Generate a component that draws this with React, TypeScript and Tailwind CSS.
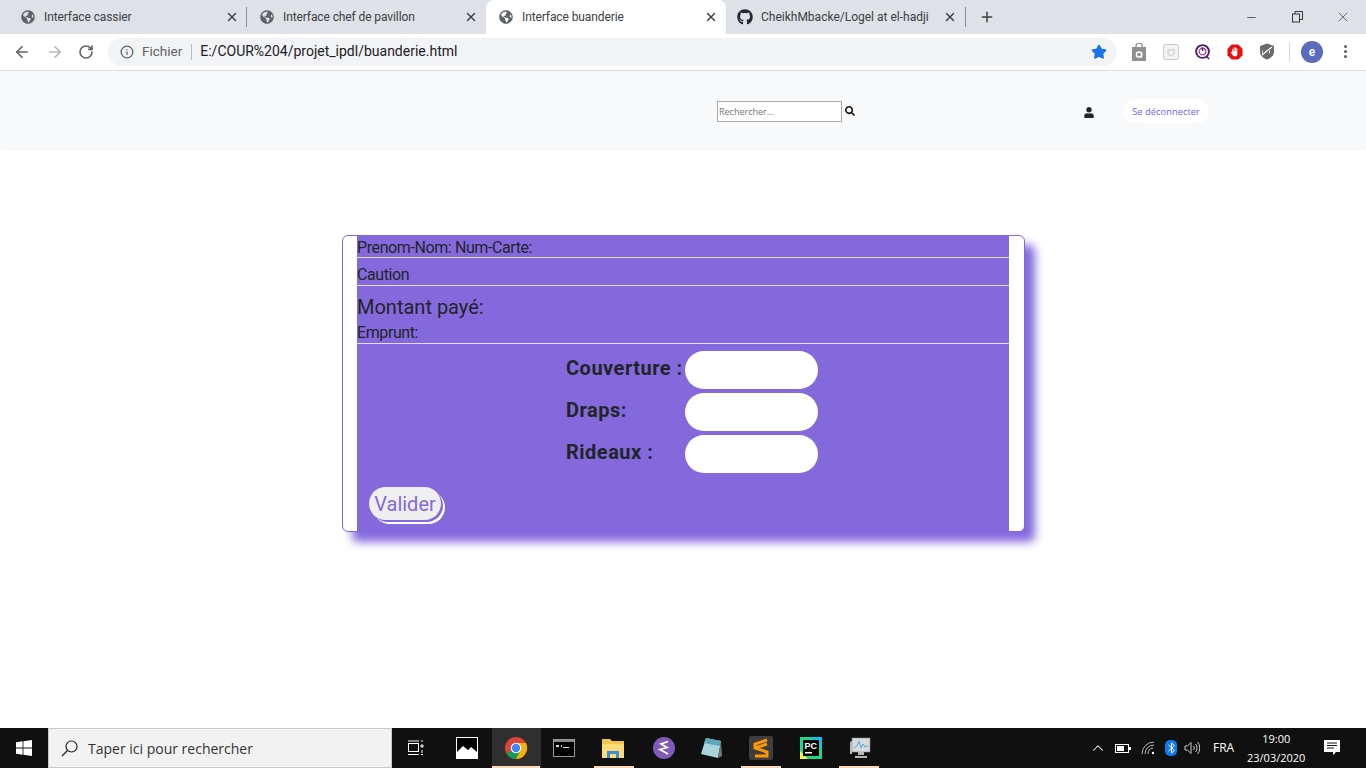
import { ArrowLeft, ArrowRight, RotateCw, Info, Plus, X, Minus, Star, MoreVertical, ChevronUp } from "lucide-react";
import { FaGlobeAmericas, FaGithub, FaUser, FaSearch } from "react-icons/fa";

const Tab = ({ title, github, active }: { title: string; github?: boolean; active?: boolean }) => (
  <div
    className={`flex h-[34px] shrink-0 items-center pr-[8px] ${active ? "w-[240px] rounded-t-lg bg-white" : "w-[239px]"} ${github ? "pl-[11px]" : "pl-[13px]"}`}
  >
    {github ? (
      <FaGithub className="h-4 w-4 shrink-0 text-[#24292e]" />
    ) : (
      <FaGlobeAmericas className="h-[14px] w-[14px] shrink-0 text-[#5f6368]" />
    )}
    <span className={`flex-1 truncate text-[12px] text-[#3c4043] ${github ? "ml-[8px]" : "ml-[9px] tracking-[-0.1px]"}`}>{title}</span>
    <X className="h-[14px] w-[14px] shrink-0 text-[#3c4043]" strokeWidth={2.4} />
  </div>
);

const Extension = ({ children }: { children: React.ReactNode }) => (
  <div className="flex h-4 w-4 items-center justify-center">{children}</div>
);

const TaskItem = ({ children, running, active }: { children: React.ReactNode; running?: boolean; active?: boolean }) => (
  <div className={`relative flex h-10 w-[49px] shrink-0 items-center justify-center ${active ? "bg-[#2f2f2f]" : ""}`}>
    {children}
    {running && <div className="absolute bottom-0 left-[4px] h-[2px] w-10 bg-[#fad9b8]" />}
    {active && <div className="absolute bottom-0 left-0 h-[2px] w-12 bg-[#fad9b8]" />}
  </div>
);

const Row = ({ label, last }: { label: string; last?: boolean }) => (
  <div className={`flex h-[38px] items-center ${last ? "" : "mb-1"}`}>
    <label className="-mt-[4px] w-[119px] whitespace-nowrap text-[20px] font-bold leading-none tracking-[0.5px] text-[#212529]">{label}</label>
    <input className="h-[38px] w-[133px] rounded-[19px] bg-white outline-none" />
  </div>
);

export default function App() {
  return (
    <div className="flex h-[768px] w-[1366px] flex-col overflow-hidden bg-white font-['Roboto',sans-serif]">
      {/* browser chrome */}
      <div className="flex h-[34px] shrink-0 items-center bg-[#dee1e6] pl-[8px]">
        <div className="w-[238px] shrink-0 overflow-hidden">
          <Tab title="Interface cassier" />
        </div>
        <div className="h-5 w-px bg-[#8a8d91]" />
        <Tab title="Interface chef de pavillon" />
        <Tab title="Interface buanderie" active />
        <Tab title="CheikhMbacke/Logel at el-hadji" github />
        <div className="h-5 w-px bg-[#8a8d91]" />
        <Plus className="ml-[13px] h-[16px] w-[16px] text-[#3c4043]" strokeWidth={2.2} />
        <div className="ml-auto flex items-center">
          <div className="flex w-[46px] justify-center">
            <Minus className="h-[13px] w-[13px] text-[#333]" strokeWidth={1.4} />
          </div>
          <div className="flex w-[46px] justify-center">
            <svg width="11" height="12" viewBox="0 0 11 12" fill="none" stroke="#333" strokeWidth="1">
              <rect x="0.5" y="3" width="7" height="8" />
              <path d="M3 3V0.5h7.5V8.5H7.5" />
            </svg>
          </div>
          <div className="flex w-[46px] justify-center">
            <X className="h-[16px] w-[16px] text-[#333]" strokeWidth={1} />
          </div>
        </div>
      </div>

      <div className="flex h-[37px] shrink-0 items-center border-b border-[#dadce0] bg-white pb-[1px]">
        <ArrowLeft className="ml-[13px] h-[18px] w-[18px] text-[#5f6368]" strokeWidth={2.2} />
        <ArrowRight className="ml-[15px] h-[18px] w-[18px] text-[#b4b6b9]" strokeWidth={2.2} />
        <RotateCw className="ml-[14px] h-[16px] w-[16px] text-[#5f6368]" strokeWidth={2.4} />
        <div className="ml-[14px] flex h-[28px] w-[1009px] items-center rounded-full bg-[#f1f3f4] pl-[12px] pr-[10px] text-[14px]">
          <Info className="h-[14px] w-[14px] text-[#5f6368]" strokeWidth={2.2} />
          <span className="ml-[8px] text-[13.5px] text-[#5f6368]">Fichier</span>
          <div className="ml-[9px] mr-[8px] h-[16px] w-px bg-[#b8babd]" />
          <span className="text-[#202124]">E:/COUR%204/projet_ipdl/buanderie.html</span>
          <Star className="ml-auto h-[16px] w-[16px] fill-[#1a73e8] text-[#1a73e8]" />
        </div>
        <div className="ml-[14px] flex items-center gap-[16px]">
          <Extension>
            <svg width="16" height="18" viewBox="0 0 16 18">
              <path d="M1 4h14v14H1z" fill="#8f8f8f" />
              <path d="M5 4V3a3 3 0 0 1 6 0v1" fill="none" stroke="#8f8f8f" strokeWidth="1.3" />
              <circle cx="8" cy="11.5" r="2.6" fill="none" stroke="#fff" strokeWidth="1.5" />
              <path d="M10.6 9v5.5" stroke="#fff" strokeWidth="1.3" />
            </svg>
          </Extension>
          <Extension>
            <svg width="16" height="16" viewBox="0 0 16 16">
              <rect x="0.5" y="0.5" width="15" height="15" rx="1.5" fill="#f1f3f4" stroke="#c9cbce" />
              <path d="M5 5l1.5 1h3L11 5v5l-3 2-3-2z" fill="none" stroke="#c9cbce" />
            </svg>
          </Extension>
          <Extension>
            <svg width="18" height="18" viewBox="0 0 17 17" fill="none">
              <circle cx="8" cy="8" r="6.8" stroke="#4a1d6b" strokeWidth="2" />
              <circle cx="8" cy="8" r="3.5" stroke="#a3479c" strokeWidth="1.4" />
              <path d="M8 3.5v4" stroke="#4a1d6b" strokeWidth="1.4" />
              <path d="M12 13l3 3" stroke="#4a1d6b" strokeWidth="1.6" />
            </svg>
          </Extension>
          <Extension>
            <svg width="18" height="18" viewBox="0 0 17 17">
              <path d="M5 0.5h7l4.5 4.5v7L12 16.5H5L0.5 12V5z" fill="#e8100f" />
              <path d="M5.5 8V5.2h1V8h.5V3.8h1V8h.5V3.5h1V8h.5V4.5h1v6c0 1.5-1 2.5-2.6 2.5-1.3 0-2-.6-2.6-1.6L4 9l.8-.5z" fill="#fff" />
            </svg>
          </Extension>
          <Extension>
            <svg width="16" height="17" viewBox="0 0 16 17">
              <path d="M8 0.5l7 2.5v6c0 3.5-3 6-7 7.5-4-1.5-7-4-7-7.5V3z" fill="#6b6b6b" />
              <path d="M3 12L13 4" stroke="#fff" strokeWidth="1.2" />
              <path d="M3.5 7.5v3h2M7 7.5H9M10.5 7.5v3" stroke="#ddd" strokeWidth="1" fill="none" />
            </svg>
          </Extension>
        </div>
        <div className="ml-[14px] h-[20px] w-px bg-[#d5d7da]" />
        <div className="ml-[11px] flex h-[22px] w-[22px] items-center justify-center rounded-full bg-[#5c6bc0] text-[12px] font-medium text-white">
          e
        </div>
        <MoreVertical className="ml-[14px] h-[17px] w-[17px] text-[#5f6368]" strokeWidth={2.4} />
      </div>

      {/* page */}
      <div className="flex-1 overflow-hidden">
        <nav className="flex h-[80px] items-start rounded-b-[4px] bg-[#f8f9fa] pl-[717px] pt-[30px] font-['Open_Sans',sans-serif]">
          <input
            placeholder="Rechercher..."
            className="h-[21px] w-[125px] border border-[#a9a9a9] bg-white px-[1px] text-[9px] outline-none placeholder:text-[#757575]"
          />
          <FaSearch className="ml-[3px] mt-[5px] h-[10px] w-[10px] text-[#111]" />
          <FaUser className="ml-[229px] mt-[6px] h-[11px] w-[10px] text-[#212529]" />
          <div className="ml-[29px] -mt-[2px] flex h-[24px] w-[86px] items-center justify-center rounded-full bg-white pt-[2px] text-[9.4px] text-[#7a5cf5]">
            Se déconnecter
          </div>
        </nav>

        <div className="ml-[342px] mt-[84px] h-[297px] w-[683px] rounded-[6px] border border-[#8469dd] bg-white pl-[14px] pr-[15px] shadow-[10px_10px_10px_#8469dd]">
          <div className="h-full bg-[#8469dd] text-[#212529]">
            <div className="h-[22px] border-b border-[#e3dcf8] pt-[1px] text-[16px] leading-[21px] tracking-[-0.4px]">Prenom-Nom: Num-Carte:</div>
            <div className="h-[28px] border-b border-[#e3dcf8] pt-[6px] text-[16px] leading-[21px] tracking-[-0.4px]">Caution</div>
            <div className="h-[58px] border-b border-[#e3dcf8]">
              <div className="pt-[8px] text-[20px] leading-[27px]">Montant payé:</div>
              <div className="pt-[1px] text-[16px] leading-[21px] tracking-[-0.4px]">Emprunt:</div>
            </div>
            <div className="pl-[209px] pt-[7px]">
              <Row label="Couverture :" />
              <Row label="Draps:" />
              <Row label="Rideaux :" last />
            </div>
            <button className="ml-[12px] mt-[14px] flex h-[33px] w-[72px] items-center justify-center rounded-full bg-[#efefef] text-[20px] leading-none text-[#8469dd] shadow-[2px_2px_0_0_#8469dd,4px_4px_0_0_#fff]">
              Valider
            </button>
          </div>
        </div>
      </div>

      {/* taskbar */}
      <div className="flex h-10 shrink-0 items-center bg-[#101010]">
        <div className="flex h-10 w-12 items-center justify-center">
          <svg width="16" height="16" viewBox="0 0 16 16" fill="#fff">
            <path d="M0 2.2l6.6-.9v6.3H0zM7.4 1.2L16 0v7.6H7.4zM0 8.4h6.6v6.3L0 13.8zM7.4 8.4H16V16l-8.6-1.2z" />
          </svg>
        </div>
        <div className="flex h-10 w-[344px] items-center border border-[#c8c8c8] bg-[#f2f2f2] pl-[12px] font-['Open_Sans',sans-serif] text-[14px] text-[#333]">
          <svg width="17" height="17" viewBox="0 0 17 17" fill="none" stroke="#222" strokeWidth="1.2">
            <circle cx="10.5" cy="6.5" r="5.5" />
            <path d="M6.5 10.5L1 16" />
          </svg>
          <span className="ml-[10px]">Taper ici pour rechercher</span>
        </div>
        <div className="ml-[16px] w-[40px]">
          <svg width="16" height="16" viewBox="0 0 16 16" fill="none" stroke="#fff" strokeWidth="1">
            <rect x="0.5" y="3.5" width="10" height="8" />
            <path d="M0 1h11M0 14.5h11M13 1h2M13 5h2v2h-2zM13 14.5h2M14 10v3" />
          </svg>
        </div>
        <div className="ml-[8px] w-[36px]">
          <svg width="22" height="22" viewBox="0 0 22 22">
            <rect x="0.5" y="0.5" width="21" height="21" fill="#000" stroke="#fff" />
            <path d="M1 21V15l6-6 5 4 3-3 6 5v6z" fill="#fff" />
          </svg>
        </div>
        <TaskItem active>
          <svg className="-ml-px" width="24" height="24" viewBox="0 0 24 24">
            <circle cx="12" cy="12" r="11" fill="#db4437" />
            <path d="M12 12L2.5 17.5A11 11 0 0 0 12 23l5.5-9.5z" fill="#0f9d58" />
            <path d="M12 7h10a11 11 0 0 1-10 16l5-9.5z" fill="#f4b400" />
            <circle cx="12" cy="12" r="5.3" fill="#fff" />
            <circle cx="12" cy="12" r="4.2" fill="#4285f4" />
          </svg>
        </TaskItem>
        <TaskItem>
          <svg className="-ml-[3px]" width="22" height="18" viewBox="0 0 22 18">
            <rect x="0.5" y="0.5" width="21" height="17" fill="#000" stroke="#999" />
            <rect x="1" y="1" width="20" height="2" fill="#888" />
            <path d="M3 6h3v2H3zM8 6h1v2H8zM10 8h6v1h-6z" fill="#ddd" />
          </svg>
        </TaskItem>
        <TaskItem running>
          <svg className="-ml-[3px]" width="22" height="20" viewBox="0 0 22 20">
            <path d="M0 1h8l2 2h12v17H0z" fill="#f3c64e" />
            <path d="M0 6h22v14H0z" fill="#fbdc78" />
            <path d="M5 20v-7h12v7h-3v-4H8v4z" fill="#3a8ed8" />
          </svg>
        </TaskItem>
        <TaskItem>
          <svg width="22" height="22" viewBox="0 0 22 22">
            <circle cx="11" cy="11" r="11" fill="#7f5ab6" />
            <path d="M15 4.5L8 7l6 3.5-7 2 8 4.5" fill="none" stroke="#fff" strokeWidth="1.8" />
          </svg>
        </TaskItem>
        <TaskItem>
          <svg className="-ml-[3px]" width="22" height="22" viewBox="0 0 22 22">
            <path d="M6 1l15 3-3 17L1 17z" fill="#a9d4de" />
            <path d="M6 1l15 3-1 5L4 6z" fill="#5da5b8" />
            <path d="M18 21l3-17 1 15z" fill="#777" />
          </svg>
        </TaskItem>
        <TaskItem running>
          <svg className="-ml-px" width="24" height="24" viewBox="0 0 24 24">
            <rect width="24" height="24" rx="2" fill="#3d3d3d" />
            <path d="M18 4L6 8v4l12 4v4L6 20M6 12l12-4" fill="none" stroke="#ff9800" strokeWidth="3" />
          </svg>
        </TaskItem>
        <TaskItem>
          <svg width="22" height="22" viewBox="0 0 22 22">
            <rect width="22" height="22" fill="#21d789" />
            <path d="M10 0h12v12z" fill="#07c3f2" />
            <path d="M0 14v8h8z" fill="#fcf84a" />
            <rect x="3" y="3" width="16" height="16" fill="#000" />
            <rect x="5" y="15" width="7" height="1.5" fill="#fff" />
            <text x="4.5" y="12" fill="#fff" fontSize="9" fontWeight="700" fontFamily="Liberation Sans">PC</text>
          </svg>
        </TaskItem>
        <TaskItem running>
          <svg width="22" height="22" viewBox="0 0 22 22">
            <rect x="3" y="1" width="18" height="14" fill="#d5dadd" stroke="#888" strokeWidth="0.6" />
            <path d="M5 11l3-2 2-5 2 7 2-4 2 3 3-1" fill="none" stroke="#5aa5d8" strokeWidth="1" />
            <path d="M1 5l2-1v13H1zM9 15h6v3H9zM6 19h12v2H6z" fill="#b5b9bc" />
          </svg>
        </TaskItem>
        <ChevronUp className="ml-[205px] h-[18px] w-[18px] text-white" strokeWidth={1.4} />
        <svg className="ml-[8px]" width="16" height="9" viewBox="0 0 16 9" fill="none">
          <rect x="0.5" y="0.5" width="13" height="8" stroke="#fff" />
          <rect x="2" y="2" width="7" height="5" fill="#fff" />
          <rect x="14" y="3" width="2" height="3" fill="#fff" />
        </svg>
        <svg className="ml-[10px]" width="14" height="14" viewBox="0 0 14 14" fill="none" stroke="#bbb" strokeWidth="1">
          <path d="M1 13A12 12 0 0 1 13 1M4 13a9 9 0 0 1 9-9M7 13a6 6 0 0 1 5-6" />
          <circle cx="12" cy="12" r="1.2" fill="#fff" stroke="none" />
        </svg>
        <div className="ml-[10px] flex h-[16px] w-[12px] items-center justify-center rounded-[5px] bg-[#0a7cf0]">
          <svg width="7" height="12" viewBox="0 0 7 12" fill="none" stroke="#fff" strokeWidth="1">
            <path d="M0.5 3l6 5.5L3.5 11V1l3 2.5L0.5 9" />
          </svg>
        </div>
        <svg className="ml-[7px]" width="16" height="14" viewBox="0 0 16 14" fill="none" stroke="#ccc" strokeWidth="1">
          <path d="M1 5h2.5L7 1.5v11L3.5 9H1zM9.5 5a3 3 0 0 1 0 4M11.5 3a6 6 0 0 1 0 8M13.5 1a9 9 0 0 1 0 12" />
        </svg>
        <span className="ml-[13px] font-['Open_Sans',sans-serif] text-[12px] text-white">FRA</span>
        <div className="ml-[12px] w-[60px] text-center font-['Open_Sans',sans-serif] text-[11px] leading-[19px] text-white">
          <div>19:00</div>
          <div className="whitespace-nowrap">23/03/2020</div>
        </div>
        <svg className="ml-[18px]" width="17" height="16" viewBox="0 0 17 16">
          <path d="M0 0h16v12h-4l-3 3v-3H0z" fill="#fff" />
          <path d="M3 3h10M3 5.5h10M3 8h7" stroke="#101010" strokeWidth="1" />
        </svg>
      </div>
    </div>
  );
}
